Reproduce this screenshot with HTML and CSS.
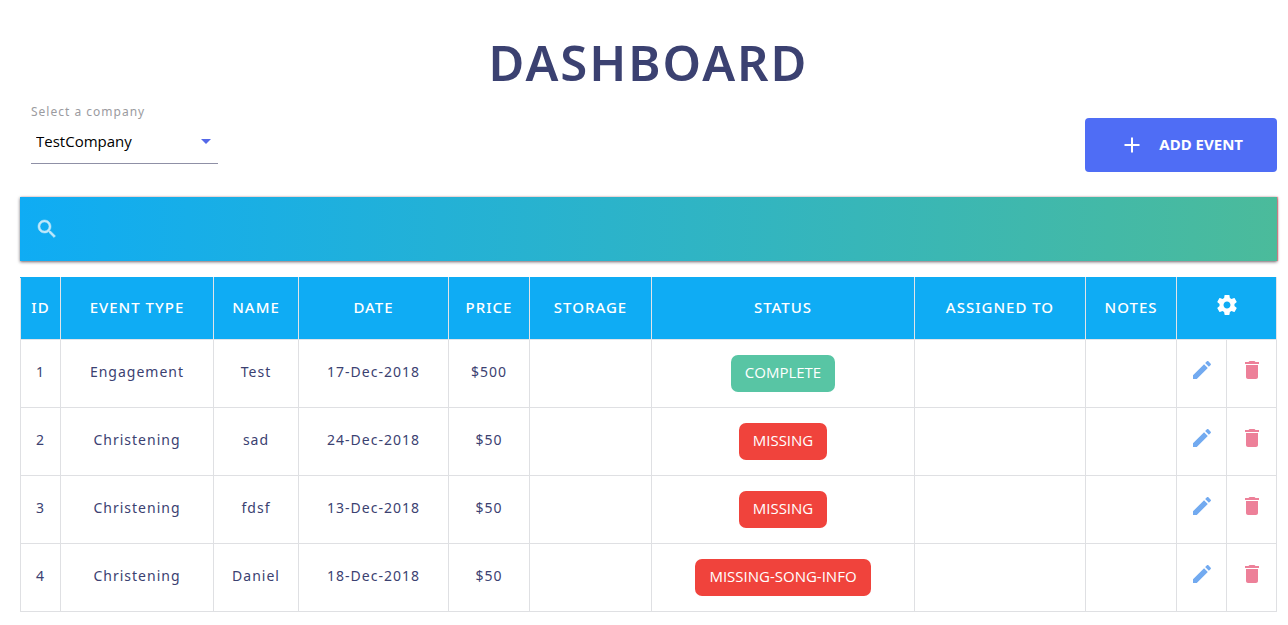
FILE: index.html
```html
<!DOCTYPE html>
<html lang="en">
<head>
<meta charset="utf-8">
<title>Dashboard</title>
<link rel="stylesheet" href="styles.css">
</head>
<body>
<svg class="sprite" aria-hidden="true">
  <symbol id="i-edit" viewBox="0 0 24 24"><path d="M3 17.250V21h3.750L17.810 9.940l-3.750-3.750L3 17.250zM20.710 7.040c.39-.39.39-1.020 0-1.410l-2.340-2.340c-.39-.39-1.020-.39-1.410 0l-1.830 1.830 3.750 3.750 1.830-1.830z"/></symbol>
  <symbol id="i-delete" viewBox="0 0 24 24"><path d="M6 19c0 1.100.9 2 2 2h8c1.100 0 2-.9 2-2V7H6v12zM19 4h-3.500l-1-1h-5l-1 1H5v2h14V4z"/></symbol>
</svg>
<main class="page">
  <h1 class="title">DASHBOARD</h1>
  <div class="toolbar">
    <div class="company">
      <label class="company-label" for="company">Select a company</label>
      <div class="company-field">
        <select class="company-select" id="company"><option>TestCompany</option></select>
        <svg class="company-arrow" viewBox="0 0 10 5" aria-hidden="true"><path d="M0 0h10L5 5z"/></svg>
      </div>
    </div>
    <button class="add" type="button">
      <svg class="add-icon" viewBox="0 0 24 24" aria-hidden="true"><path d="M19.500 13h-6.500v6.500h-2v-6.500H4.500v-2h6.500V4.500h2v6.500h6.500z"/></svg>
      <span>ADD EVENT</span>
    </button>
  </div>
  <div class="search">
    <label class="search-label" for="search" aria-label="Search"><svg class="search-icon" viewBox="0 0 24 24" aria-hidden="true"><path d="M15.500 14h-.79l-.28-.27C15.410 12.590 16 11.110 16 9.500 16 5.910 13.090 3 9.500 3S3 5.910 3 9.500 5.910 16 9.500 16c1.610 0 3.090-.59 4.230-1.570l.27.28v.79l5 4.990L20.490 19l-4.990-5zm-6 0C7.010 14 5 11.990 5 9.500S7.010 5 9.500 5 14 7.010 14 9.500 11.990 14 9.500 14z"/></svg></label>
    <input class="search-input" id="search" type="search">
  </div>
  <table class="events">
    <colgroup>
      <col class="c-id"><col class="c-type"><col class="c-name"><col class="c-date"><col class="c-price"><col class="c-storage"><col class="c-status"><col class="c-assigned"><col class="c-notes"><col class="c-action"><col class="c-action">
    </colgroup>
    <thead>
      <tr>
        <th>ID</th><th>EVENT TYPE</th><th>NAME</th><th>DATE</th><th>PRICE</th><th>STORAGE</th><th>STATUS</th><th>ASSIGNED TO</th><th>NOTES</th>
        <th colspan="2" aria-label="Actions"><svg class="icon" viewBox="0 0 24 24" aria-hidden="true"><path d="M19.430 12.980c.04-.32.07-.64.07-.98s-.03-.66-.07-.98l2.110-1.650c.19-.15.24-.42.12-.64l-2-3.460c-.12-.22-.39-.3-.61-.22l-2.490 1c-.52-.4-1.080-.73-1.690-.98l-.38-2.650C14.460 2.180 14.250 2 14 2h-4c-.25 0-.46.18-.49.42l-.38 2.650c-.61.25-1.170.59-1.690.98l-2.490-1c-.23-.09-.49 0-.61.22l-2 3.460c-.13.22-.07.49.12.64l2.110 1.650c-.04.32-.07.65-.07.98s.03.66.07.98l-2.110 1.650c-.19.15-.24.42-.12.64l2 3.460c.12.22.39.3.61.22l2.490-1c.52.4 1.080.73 1.690.98l.38 2.650c.03.24.24.42.49.42h4c.25 0 .46-.18.49-.42l.38-2.650c.61-.25 1.170-.59 1.690-.98l2.490 1c.23.09.49 0 .61-.22l2-3.460c.12-.22.07-.49-.12-.64l-2.110-1.650zM12 15.500c-1.930 0-3.500-1.570-3.500-3.500s1.570-3.500 3.500-3.500 3.500 1.570 3.500 3.500-1.570 3.500-3.500 3.500z"/></svg></th>
      </tr>
    </thead>
    <tbody>
      <tr>
        <td>1</td><td>Engagement</td><td>Test</td><td>17-Dec-2018</td><td>$500</td><td></td>
        <td><button class="status complete" type="button">COMPLETE</button></td><td></td><td></td>
        <td><button class="action edit" type="button" aria-label="Edit"><svg class="icon"><use href="#i-edit"/></svg></button></td>
        <td><button class="action delete" type="button" aria-label="Delete"><svg class="icon"><use href="#i-delete"/></svg></button></td>
      </tr>
      <tr>
        <td>2</td><td>Christening</td><td>sad</td><td>24-Dec-2018</td><td>$50</td><td></td>
        <td><button class="status missing" type="button">MISSING</button></td><td></td><td></td>
        <td><button class="action edit" type="button" aria-label="Edit"><svg class="icon"><use href="#i-edit"/></svg></button></td>
        <td><button class="action delete" type="button" aria-label="Delete"><svg class="icon"><use href="#i-delete"/></svg></button></td>
      </tr>
      <tr>
        <td>3</td><td>Christening</td><td>fdsf</td><td>13-Dec-2018</td><td>$50</td><td></td>
        <td><button class="status missing" type="button">MISSING</button></td><td></td><td></td>
        <td><button class="action edit" type="button" aria-label="Edit"><svg class="icon"><use href="#i-edit"/></svg></button></td>
        <td><button class="action delete" type="button" aria-label="Delete"><svg class="icon"><use href="#i-delete"/></svg></button></td>
      </tr>
      <tr>
        <td>4</td><td>Christening</td><td>Daniel</td><td>18-Dec-2018</td><td>$50</td><td></td>
        <td><button class="status missing" type="button">MISSING-SONG-INFO</button></td><td></td><td></td>
        <td><button class="action edit" type="button" aria-label="Edit"><svg class="icon"><use href="#i-edit"/></svg></button></td>
        <td><button class="action delete" type="button" aria-label="Delete"><svg class="icon"><use href="#i-delete"/></svg></button></td>
      </tr>
    </tbody>
  </table>
</main>
</body>
</html>
```
FILE: styles.css
```css
* { box-sizing: border-box; }
body {
  margin: 0;
  background: #fff;
  color: #3b4171;
  font-family: "Noto Sans", "Open Sans", sans-serif;
}
.sprite { display: none; }
.page { padding: 26px 11px 13px 20px; }
.title {
  margin: 0 0 2px;
  text-align: center;
  font-size: 49px;
  line-height: 72px;
  font-weight: 600;
  letter-spacing: 2px;
}
.toolbar {
  display: flex;
  justify-content: space-between;
  align-items: flex-end;
  padding-left: 11px;
}
.company { width: 187px; padding-bottom: 8px; }
.company-label {
  display: block;
  padding-top: 4px;
  font-size: 12px;
  line-height: 16px;
  letter-spacing: 1px;
  color: #9b9ba0;
}
.company-field {
  display: grid;
  align-items: center;
  border-bottom: 1px solid #8f90a6;
}
.company-select {
  grid-area: 1 / 1;
  width: 100%;
  height: 43px;
  padding: 0 24px 2px 5px;
  border: 0;
  background: none;
  appearance: none;
  font: 15px "Open Sans", sans-serif;
  color: #000;
}
.company-arrow {
  grid-area: 1 / 1;
  justify-self: end;
  width: 10px;
  height: 5px;
  margin-right: 7px;
  fill: #5468e8;
  pointer-events: none;
}
.add {
  display: flex;
  align-items: center;
  justify-content: center;
  gap: 15px;
  height: 54px;
  padding: 0 34px 0 35px;
  border: 0;
  border-radius: 4px;
  background: #4f6df5;
  color: #fff;
  font: 700 15px/20px "Noto Sans", sans-serif;
}
.add span { padding-bottom: 2px; }
.add-icon { width: 24px; height: 24px; fill: currentColor; }
.search {
  display: flex;
  align-items: center;
  height: 64px;
  margin: 25px 0 16px;
  padding: 0 15px;
  background: linear-gradient(90deg, #0facf4, #4bbb9b);
  box-shadow: 0 1px 3px rgba(40, 30, 40, .65), 1px 0 1px rgba(255, 90, 100, .6);
}
.search-label { display: flex; }
.search-icon {
  width: 24px;
  height: 24px;
  fill: #bfe8fb;
  stroke: #bfe8fb;
  stroke-width: .5;
}
.search-input {
  flex: 1;
  height: 40px;
  border: 0;
  background: none;
  color: #fff;
  font: 15px "Noto Sans", sans-serif;
}
.events {
  width: 100%;
  table-layout: fixed;
  border-collapse: collapse;
  text-align: center;
  font-size: 14px;
  letter-spacing: 1px;
}
.c-id { width: 40px; }
.c-type { width: 153px; }
.c-name { width: 85px; }
.c-date { width: 150px; }
.c-price { width: 81px; }
.c-storage { width: 122px; }
.c-status { width: 263px; }
.c-assigned { width: 171px; }
.c-notes { width: 91px; }
.c-action { width: 50px; }
.events th {
  height: 62px;
  padding: 0 0 4px;
  border: 1px solid #e2e4e8;
  border-top-color: #0facf4;
  background: #0facf4;
  color: #fff;
  font-weight: 500;
  font-size: 15px;
}
.events td {
  height: 68px;
  padding: 0 0 4px;
  border: 1px solid #dfe0e3;
}
.status {
  height: 37px;
  margin-top: 4px;
  padding: 0 14px 3px;
  border: 0;
  border-radius: 7px;
  color: #fff;
  font: 15px "Open Sans", sans-serif;
}
.complete { background: #58c5a4; }
.missing { background: #f0433c; }
.action {
  padding: 0;
  border: 0;
  background: none;
  vertical-align: middle;
}
.icon {
  display: block;
  width: 24px;
  height: 24px;
  margin: 0 auto 4px;
  fill: currentColor;
}
.edit { color: #72aaf0; }
.delete { color: #ed8099; }
```
